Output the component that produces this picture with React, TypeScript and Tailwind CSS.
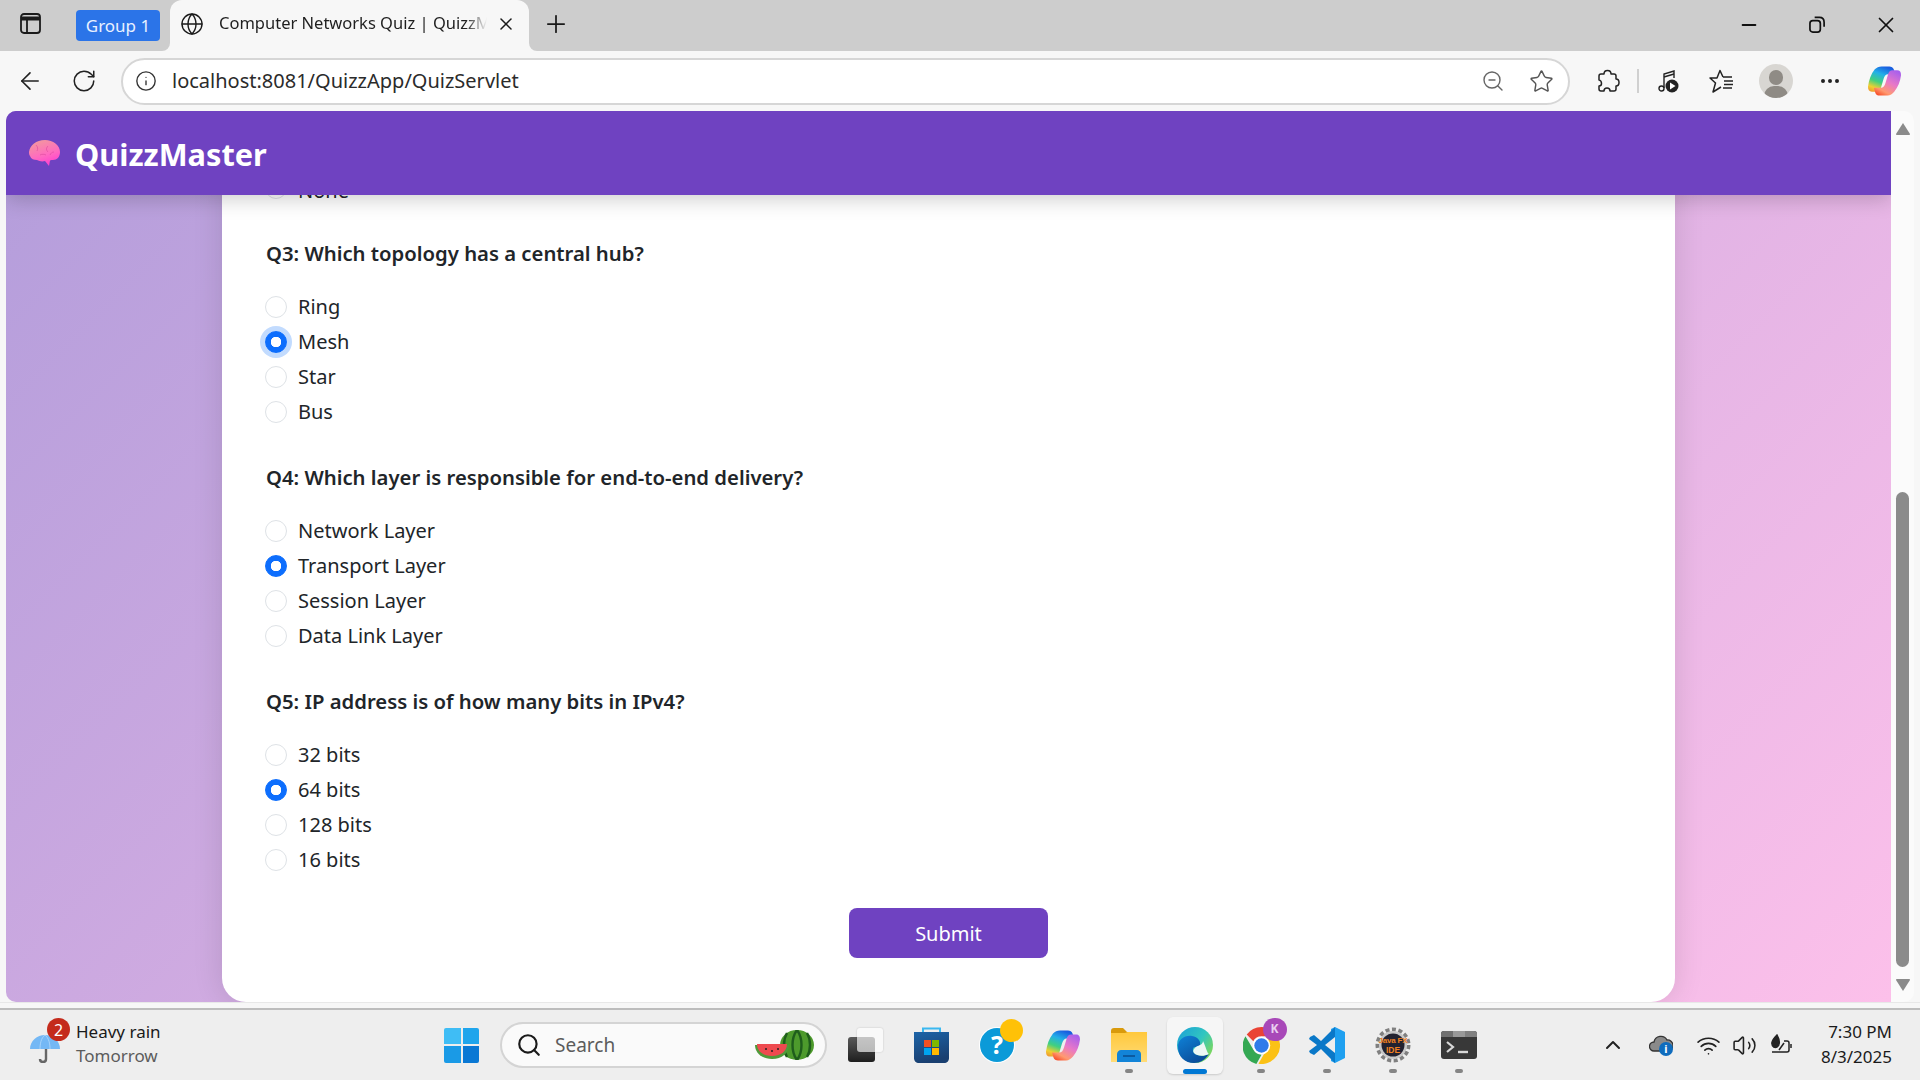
import { ArrowLeft, ChevronUp, Globe, Info, Minus, MoreHorizontal, Plus, RotateCw, Search, Star, Volume2, Wifi, X, ZoomOut } from 'lucide-react'

const UI_FONT = "font-['Noto_Sans',sans-serif]"

const questions = [
  { title: 'Q3: Which topology has a central hub?', options: ['Ring', 'Mesh', 'Star', 'Bus'], picked: 1, focused: true },
  { title: 'Q4: Which layer is responsible for end-to-end delivery?', options: ['Network Layer', 'Transport Layer', 'Session Layer', 'Data Link Layer'], picked: 1 },
  { title: 'Q5: IP address is of how many bits in IPv4?', options: ['32 bits', '64 bits', '128 bits', '16 bits'], picked: 1 },
]

function Copilot({ size, id }: { size: number; id: string }) {
  return (
    <svg width={size} height={size} viewBox="0 0 35 32">
      <defs>
        <linearGradient id={`${id}a`} x1="0.6" y1="0" x2="0.2" y2="1">
          <stop offset="0" stopColor="#1a5fe0" />
          <stop offset="0.3" stopColor="#22b0e8" />
          <stop offset="0.6" stopColor="#40d080" />
          <stop offset="0.85" stopColor="#f0d030" />
          <stop offset="1" stopColor="#f0a030" />
        </linearGradient>
        <linearGradient id={`${id}b`} x1="0.8" y1="0" x2="0.2" y2="1">
          <stop offset="0" stopColor="#a860ec" />
          <stop offset="0.45" stopColor="#e878c8" />
          <stop offset="0.8" stopColor="#ff9a70" />
          <stop offset="1" stopColor="#f8502c" />
        </linearGradient>
      </defs>
      <path d="M14 1h8c2 0 4 1 4.500 3l1.500 5h-7c-3 0-4 2-5 5l-3 10c-1 2-2 3-4 3H4c-3 0-4-2-4-5C1 15 3 9 7 4c2-2 4-3 7-3z" fill={`url(#${id}a)`} />
      <path d="M20 31h-8c-2 0-4-1-4.500-3L6 23h7c3 0 4-2 5-5l3-10c1-2 2-3 4-3h5c3 0 4 2 4 5-1 7-3 12-7 17-2 2-4 4-7 4z" fill={`url(#${id}b)`} />
    </svg>
  )
}

function Brain() {
  return (
    <svg width="33" height="28" viewBox="0 0 33 28">
      <defs>
        <linearGradient id="brain" x1="0.2" y1="0" x2="0.6" y2="1">
          <stop offset="0" stopColor="#f29a9c" />
          <stop offset="0.6" stopColor="#ff6ac0" />
          <stop offset="1" stopColor="#ff3fd0" />
        </linearGradient>
      </defs>
      <path d="M1 13C2 6 8 1 17 1c8 0 15 5 15 12 0 5-3 8-7 8-1 0-2 0-3 .5l-1 5.500-4-5c-3 1-6 0-8-1-3 0-6-1-7-4-1-1-1-3-1-4z" fill="url(#brain)" />
      <path d="M8 6c2 2 2 4 1 6M20 7c-2 2-2 4 0 6M26 13c-2 0-3 1-4 3M12 16c2-1 4-1 6 0" fill="none" stroke="#d8459a" strokeWidth="0.8" opacity="0.7" />
    </svg>
  )
}

function Watermelon() {
  return (
    <svg width="60" height="30" viewBox="0 0 60 30">
      <ellipse cx="42" cy="15" rx="17" ry="15" fill="#4d9a2c" />
      <path d="M42 0c-6 8-6 22 0 30M42 0c6 8 6 22 0 30M32 3c-4 7-4 17 0 24M52 3c4 7 4 17 0 24" fill="none" stroke="#1f5d1c" strokeWidth="2.4" />
      <path d="M0 15h34c0 8-7 14-17 14S0 23 0 15z" fill="#4f9a3a" />
      <path d="M2 14h30c0 7-6 12-15 12S2 21 2 14z" fill="#ee4a4f" />
      <circle cx="11" cy="19" r="1" fill="#222" />
      <circle cx="17" cy="21" r="1" fill="#222" />
      <circle cx="23" cy="19" r="1" fill="#222" />
    </svg>
  )
}

function Edge() {
  return (
    <svg width="36" height="36" viewBox="0 0 36 36">
      <defs>
        <linearGradient id="edgeA" x1="0" y1="0" x2="1" y2="0.7">
          <stop offset="0" stopColor="#1a9fd8" />
          <stop offset="0.6" stopColor="#31c6c0" />
          <stop offset="1" stopColor="#7fd858" />
        </linearGradient>
        <linearGradient id="edgeB" x1="0" y1="0" x2="0.7" y2="1">
          <stop offset="0" stopColor="#0f82d8" />
          <stop offset="1" stopColor="#0a4a96" />
        </linearGradient>
      </defs>
      <circle cx="18" cy="18" r="18" fill="url(#edgeA)" />
      <path d="M1 20C1 12 8 8 15 9c6 1 9 5 8 9-1 2-3 3-5 2-2 0-3 3-1 6 3 3 9 4 15 1-4 6-9 9-15 9C8 36 1 30 1 20z" fill="url(#edgeB)" />
      <path d="M17 22c2-3 4-3 6-4 3-1 3-4 3-4 3 6 4 12 6 13-6 3-12 2-15-1-1-1-1-3 0-4z" fill="#eef7f4" />
    </svg>
  )
}

function Chrome() {
  return (
    <svg width="37" height="37" viewBox="0 0 36 36">
      <path d="M18 0a18 18 0 0 1 15.600 9H18a9 9 0 0 0-8 4.800L3.600 7.400A18 18 0 0 1 18 0z" fill="#ea4335" />
      <path d="M2.400 9 10 22a9 9 0 0 0 8 5l-5 9A18 18 0 0 1 2.400 9z" fill="#34a853" />
      <path d="M33.600 9A18 18 0 0 1 15 35.800L23 22a9 9 0 0 0-1-13z" fill="#fbc116" />
      <circle cx="18" cy="18" r="8.500" fill="#fff" />
      <circle cx="18" cy="18" r="7" fill="#2f7bea" />
    </svg>
  )
}

function VsCode() {
  return (
    <svg width="36" height="36" viewBox="0 0 36 36">
      <path d="M26 0 36 5v26l-10 5-4-2V2z" fill="#1fa0f0" />
      <path d="M26 0v36L12 22l-7 6-4-2-1-2 8-6-8-6 1-2 4-2 7 6z" fill="#0a78c8" />
      <path d="M26 10v16l-10-8z" fill="#eeeeee" />
    </svg>
  )
}

function Gear() {
  return (
    <svg width="36" height="36" viewBox="0 0 36 36">
      <circle cx="18" cy="18" r="15.500" fill="none" stroke="#808080" strokeWidth="4" strokeDasharray="4 2.500" />
      <circle cx="18" cy="18" r="14" fill="#c8c8c8" />
      <circle cx="18" cy="18" r="11.500" fill="#222230" />
      <text x="18" y="15.500" textAnchor="middle" fontSize="8" fontWeight="700" fill="#f08020" fontFamily="Liberation Sans, sans-serif" textLength="29">Java FX</text>
      <text x="18" y="25.500" textAnchor="middle" fontSize="8.500" fontWeight="700" fill="#f08020" fontFamily="Liberation Sans, sans-serif">IDE</text>
    </svg>
  )
}

function Question({ title, options, picked, focused }: { title: string; options: string[]; picked: number; focused?: boolean }) {
  return (
    <div className="pb-[31px] last:pb-[28px]">
      <h5 className="mb-[23px] h-[30px] text-[20.3px] leading-[28px] font-semibold text-[#212529]">{title}</h5>
      {options.map((opt, i) => (
        <Option key={opt} label={opt} group={title} checked={i === picked} focused={focused && i === picked} />
      ))}
    </div>
  )
}

function Option({ label, group, checked, focused, labelClass }: { label: string; group: string; checked?: boolean; focused?: boolean; labelClass?: string }) {
  return (
    <label className="mb-[5px] flex h-[30px] items-center gap-[11px] -ml-px text-[20px] text-[#212529]">
      <input
        type="radio"
        name={group}
        defaultChecked={checked}
        className={`size-[22px] appearance-none rounded-full border border-[#dee2e6] bg-white checked:border-[#0d6efd] checked:bg-[radial-gradient(circle,#fff_5px,#0d6efd_5.5px)] ${focused ? 'shadow-[0_0_0_5px_rgba(13,110,253,0.25)]' : ''}`}
      />
      <span className={labelClass}>{label}</span>
    </label>
  )
}

function TabStrip() {
  return (
    <div className="flex h-[51px] shrink-0 items-center bg-[#cdcdcd]">
      <svg className="mb-[4px] ml-[20px]" width="21" height="21" viewBox="0 0 21 21" fill="none" stroke="#1a1a1a" strokeWidth="1.8">
        <rect x="1" y="1" width="19" height="19" rx="3" />
        <path d="M1 5.500h19" strokeWidth="4" />
        <path d="M7 6v14" />
      </svg>
      <div className="ml-[35px] flex h-[31px] w-[84px] items-center justify-center rounded-[4px] bg-[#2b74e8] text-[17px] text-[#e8f0ff]">Group 1</div>
      <div className="relative ml-[10px] flex h-full w-[359px] items-center rounded-t-[12px] bg-[#f7f7f7] pb-[4px] pl-[10px]">
        <div className="absolute bottom-0 -left-[8px] size-[8px] bg-[#f7f7f7]">
          <div className="size-full rounded-br-[8px] bg-[#cdcdcd]" />
        </div>
        <div className="absolute -right-[8px] bottom-0 size-[8px] bg-[#f7f7f7]">
          <div className="size-full rounded-bl-[8px] bg-[#cdcdcd]" />
        </div>
        <Globe size={24} strokeWidth={1.4} className="text-[#1a1a1a]" />
        <span className="ml-[15px] w-[268px] overflow-hidden text-[16.5px] whitespace-nowrap text-[#1f1f1f] [mask-image:linear-gradient(90deg,#000_92%,transparent)]">Computer Networks Quiz | QuizzMaster</span>
        <X size={20} strokeWidth={1.8} className="ml-[9px] text-[#1a1a1a]" />
      </div>
      <Plus size={28} strokeWidth={1.5} className="mb-[4px] ml-[13px] text-[#1a1a1a]" />
      <Minus size={22} strokeWidth={2} className="mb-[2px] ml-auto text-[#111]" />
      <svg className="mb-[2px] ml-[49px]" width="17" height="17" viewBox="0 0 18 18" fill="none" stroke="#111" strokeWidth="1.8">
        <rect x="1" y="5" width="11" height="12" rx="3" />
        <path d="M6 1.500h5c3 0 5 2 5 5v5" />
      </svg>
      <X size={26} strokeWidth={1.6} className="mr-[21px] mb-[2px] ml-[47px] text-[#111]" />
    </div>
  )
}

function Toolbar() {
  return (
    <div className="flex h-[60px] shrink-0 items-center bg-[#f7f7f7]">
      <ArrowLeft size={28} strokeWidth={1.4} className="ml-[16px] text-[#222]" />
      <RotateCw size={26} strokeWidth={1.4} className="ml-[27px] text-[#222]" />
      <div className="ml-[24px] flex h-[47px] w-[1449px] items-center rounded-full border-2 border-[#d6d6d6] bg-white pl-[12px]">
        <Info size={22} strokeWidth={1.5} className="text-[#333]" />
        <span className="ml-[15px] text-[20px] text-[#2b2b2b]">localhost:8081/QuizzApp/QuizServlet</span>
        <ZoomOut size={24} strokeWidth={1.4} className="ml-auto text-[#666]" />
        <Star size={25} strokeWidth={1.4} className="mr-[14px] ml-[24px] text-[#555]" />
      </div>
      <svg className="ml-[25px]" width="25" height="25" viewBox="0 0 25 25" fill="none" stroke="#222" strokeWidth="1.5" strokeLinejoin="round">
        <path d="M8 5h1c0-2 1.500-3.500 3.500-3.500S16 3 16 5h3c1 0 2 1 2 2v3c2 0 3 1.500 3 3.500S23 17 21 17v3c0 1-1 2-2 2h-4c0-2-1-3-3-3s-3 1-3 3H6c-1 0-2-1-2-2v-3c1.500 0 2.500-1 2.500-2.500S5.500 11 4 11V7c0-1 1-2 2-2z" />
      </svg>
      <div className="ml-[17px] h-[24px] w-[2px] bg-[#d0d0d0]" />
      <svg className="ml-[19px]" width="21" height="24" viewBox="0 0 21 24" fill="none" stroke="#222" strokeWidth="1.4">
        <circle cx="3.500" cy="19.500" r="2.500" />
        <path d="M6 19V5l10-3v7" />
        <path d="M6 8l10-3" />
        <circle cx="14" cy="17" r="6.500" fill="#222" stroke="none" />
        <path d="M12 13.500v7l5.500-3.500z" fill="#fff" stroke="none" />
      </svg>
      <svg className="ml-[30px]" width="25" height="25" viewBox="0 0 25 25" fill="none" stroke="#222" strokeWidth="1.5" strokeLinejoin="round">
        <path d="M14 8l-3-6.500L8 9H1l5.500 5L4 23l8-5" />
        <path d="M14 8h9M15 12h9M15 15.500h9M14 19h9" />
      </svg>
      <div className="relative ml-[25px] h-[34px] w-[34px] overflow-hidden rounded-full bg-[#d8d6d2]">
        <div className="absolute top-[6px] left-[10px] h-[15px] w-[14px] rounded-full bg-[#8f8b85]" />
        <div className="absolute top-[22px] left-[5px] h-[20px] w-[24px] rounded-full bg-[#8f8b85]" />
      </div>
      <MoreHorizontal size={24} strokeWidth={2} className="ml-[25px] text-[#222]" />
      <div className="ml-[26px]">
        <Copilot size={34} id="cpTool" />
      </div>
    </div>
  )
}

function Page() {
  return (
    <div className="mr-[6px] ml-[6px] flex min-h-0 flex-1 overflow-hidden rounded-[10px]">
      <main className="relative flex flex-1 flex-col justify-end overflow-hidden bg-[linear-gradient(135deg,#b39ddb,#fcc0ea)]">
        <nav className="absolute top-0 right-0 left-0 z-10 flex h-[84px] items-center bg-[#6f42c1] pl-[22px] shadow-[0_4px_20px_rgba(0,0,0,0.2)]">
          <Brain />
          <span className="ml-[14px] pt-[3px] text-[30.7px] font-bold text-white">QuizzMaster</span>
        </nav>
        <div className="ml-[216px] w-[1453px] shrink-0 rounded-b-[24px] bg-white px-[44px] pb-[44px] shadow-[0_0_30px_rgba(0,0,0,0.12)]">
          <div className="pb-[31px]">
            <Option label="None" group="q2" labelClass="pt-[5px]" />
          </div>
          <div>
            {questions.map((q) => (
              <Question key={q.title} {...q} />
            ))}
          </div>
          <div className="flex justify-center">
            <button className="h-[50px] w-[199px] rounded-[8px] bg-[#6f42c1] pt-[2px] text-[20px] text-white">Submit</button>
          </div>
        </div>
      </main>
      <aside className="flex w-[23px] shrink-0 flex-col items-center bg-[#fbfbfb] pt-[12px]">
        <svg width="14" height="12" viewBox="0 0 14 12">
          <path d="M7 0l7 11c0 .5-.3 1-1 1H1c-.7 0-1-.5-1-1z" fill="#8b8b8b" />
        </svg>
        <div className="mt-[357px] h-[475px] w-[13px] rounded-full bg-[#8b8b8b]" />
        <svg className="mt-[12px]" width="14" height="12" viewBox="0 0 14 12">
          <path d="M7 12L0 1c0-.5.3-1 1-1h12c.7 0 1 .5 1 1z" fill="#8b8b8b" />
        </svg>
      </aside>
    </div>
  )
}

function Slot({ children, dot, active }: { children?: React.ReactNode; dot?: boolean; active?: boolean }) {
  return (
    <div className={`relative mx-[5px] flex h-[57px] w-[56px] items-center justify-center rounded-[6px] ${active ? 'bg-[#f6f6f6] shadow-[0_1px_2px_rgba(0,0,0,0.15)]' : ''}`}>
      {children}
      {dot && <div className="absolute bottom-[1px] h-[4px] w-[8px] rounded-full bg-[#858585]" />}
      {active && <div className="absolute bottom-0 h-[5px] w-[24px] rounded-full bg-[#0078d4]" />}
    </div>
  )
}

function Taskbar() {
  return (
    <div className="flex h-[72px] shrink-0 items-center border-t-2 border-[#bdbdbd] bg-[#eeeeee]">
      <div className="relative ml-[30px] h-[40px] w-[30px]">
        <svg className="mt-[8px]" width="30" height="30" viewBox="0 0 30 30">
          <path d="M0 16C0 8 7 2 15 2s15 6 15 14z" fill="#74b8f5" />
          <path d="M15 2c-4 3-5 9-5 14M15 2c4 3 5 9 5 14" fill="none" stroke="#a8d4fa" strokeWidth="1" />
          <path d="M16 16v10c0 4-6 4-6 0" fill="none" stroke="#666" strokeWidth="2.400" />
        </svg>
        <div className="absolute -top-[7px] left-[17px] flex size-[23px] items-center justify-center rounded-full bg-[#c42b1c] text-[16px] text-white">2</div>
      </div>
      <div className="mb-[3px] ml-[16px] w-[100px] text-[17px] leading-[24px]">
        <div className="text-[#1a1a1a]">Heavy rain</div>
        <div className="text-[#5c5c5c]">Tomorrow</div>
      </div>
      <div className="ml-[268px] grid h-[35px] w-[35px] grid-cols-2 gap-[2px]">
        <div className="rounded-tl-[2px] bg-[#3fbdf5]" />
        <div className="rounded-tr-[2px] bg-[#1fa5ec]" />
        <div className="rounded-bl-[2px] bg-[#1a9ae6]" />
        <div className="rounded-br-[2px] bg-[#0a78d4]" />
      </div>
      <div className="ml-[21px] flex h-[46px] w-[327px] items-center rounded-full border-2 border-[#d4d4d4] bg-[#fafafa] pl-[14px]">
        <Search size={26} strokeWidth={2} className="text-[#1a1a1a]" />
        <span className="ml-[13px] text-[19px] text-[#5c5c5c]">Search</span>
        <div className="mr-[10px] ml-auto">
          <Watermelon />
        </div>
      </div>
      <div className="ml-[5px] flex">
        <Slot>
          <div className="relative h-[34px] w-[35px]">
            <div className="absolute bottom-0 left-0 h-[25px] w-[27px] rounded-[3px] bg-[linear-gradient(#5a5a5a,#1e1e1e)]" />
            <div className="absolute top-0 right-0 h-[24px] w-[26px] rounded-[3px] bg-white/65 shadow-[0_0_2px_rgba(0,0,0,0.2)]" />
          </div>
        </Slot>
        <Slot>
          <svg width="35" height="36" viewBox="0 0 35 36">
            <defs>
              <linearGradient id="store" x1="0" y1="0" x2="0.3" y2="1">
                <stop offset="0" stopColor="#1c64a8" />
                <stop offset="1" stopColor="#193f70" />
              </linearGradient>
            </defs>
            <path d="M9 6V1.500h17V6" fill="none" stroke="#3ab8f0" strokeWidth="2" />
            <path d="M0 5h35v26c0 3-2 5-5 5H5c-3 0-5-2-5-5z" fill="url(#store)" />
            <rect x="10" y="13" width="7" height="7" fill="#f25022" />
            <rect x="18" y="13" width="7" height="7" fill="#7fba00" />
            <rect x="10" y="21" width="7" height="7" fill="#00a4ef" />
            <rect x="18" y="21" width="7" height="7" fill="#ffb900" />
          </svg>
        </Slot>
        <Slot>
          <div className="relative flex size-[34px] items-center justify-center rounded-full bg-[#0b9ad8] text-[25px] font-bold text-white ring-1 ring-white">
            ?
            <div className="absolute -top-[9px] -right-[9px] h-[23px] w-[23px] rounded-full bg-[#ffc107]" />
          </div>
        </Slot>
        <Slot>
          <Copilot size={35} id="cpBar" />
        </Slot>
        <Slot dot>
          <svg width="36" height="34" viewBox="0 0 36 34">
            <defs>
              <linearGradient id="folder" x1="0" y1="0" x2="0" y2="1">
                <stop offset="0" stopColor="#ffc83c" />
                <stop offset="1" stopColor="#ffdc78" />
              </linearGradient>
            </defs>
            <path d="M0 3c0-2 1-3 3-3h9l4 4h17c2 0 3 1 3 3v4H0z" fill="#d99a0c" />
            <path d="M0 5h14l3-1h19v30H0z" fill="url(#folder)" />
            <path d="M6 34V26c0-2 2-4 4-4h16c2 0 4 2 4 4v8z" fill="#1284d8" />
            <path d="M12 28h12" stroke="#0b5aa0" strokeWidth="2" />
          </svg>
        </Slot>
        <Slot active>
          <Edge />
        </Slot>
        <Slot dot>
          <div className="relative">
            <Chrome />
            <div className="absolute -top-[9px] -right-[7px] flex h-[23px] w-[24px] items-center justify-center rounded-full bg-[#a848b8] text-[12px] font-bold text-[#e8d0f0]">K</div>
          </div>
        </Slot>
        <Slot dot>
          <VsCode />
        </Slot>
        <Slot dot>
          <Gear />
        </Slot>
        <Slot dot>
          <svg width="36" height="28" viewBox="0 0 36 28">
            <rect width="36" height="28" rx="3" fill="#383838" />
            <path d="M0 3c0-2 1-3 3-3h9v6H0z" fill="#707070" />
            <rect x="12" y="0" width="12" height="6" fill="#999" />
            <path d="M24 0h9c2 0 3 1 3 3v3H24z" fill="#808080" />
            <path d="M6 11l6 5-6 5" fill="none" stroke="#d8d8d8" strokeWidth="2.200" />
            <path d="M17 21h10" stroke="#d8d8d8" strokeWidth="2.400" />
          </svg>
        </Slot>
      </div>
      <ChevronUp size={24} strokeWidth={2} className="ml-auto text-[#222]" />
      <div className="relative ml-[24px] h-[22px] w-[24px]">
        <svg width="24" height="18" viewBox="0 0 24 18">
          <path d="M5 17a4.500 4.500 0 0 1 0-9 7 7 0 0 1 13-2 5 5 0 0 1 1 11z" fill="#8a8a8a" stroke="#333" strokeWidth="1.3" />
        </svg>
        <div className="absolute right-0 bottom-0 flex size-[14px] items-center justify-center rounded-full bg-[#0f6cbd] text-[11px] font-bold text-white">i</div>
      </div>
      <Wifi size={25} strokeWidth={1.6} className="ml-[23px] text-[#222]" />
      <Volume2 size={25} strokeWidth={1.5} className="ml-[11px] text-[#222]" />
      <svg className="ml-[12px]" width="24" height="22" viewBox="0 0 24 22" fill="none" stroke="#222" strokeWidth="1.500">
        <path d="M3 18h15c1 0 2-1 2-2V9c0-1-1-2-2-2h-3M22 10v4" />
        <path d="M8 1c-3 3-6 6-5 9 0 3 3 4 5 3 2-1 4-5 0-12z" fill="#222" />
        <path d="M10 16l5-7" />
      </svg>
      <div className="mr-[28px] mb-[2px] ml-[19px] w-[80px] text-right text-[17px] leading-[25px] text-[#1a1a1a]">
        <div>7:30 PM</div>
        <div>8/3/2025</div>
      </div>
    </div>
  )
}

export default function App() {
  return (
    <div className={`flex h-screen w-screen flex-col overflow-hidden bg-[#f7f7f7] ${UI_FONT}`}>
      <TabStrip />
      <Toolbar />
      <Page />
      <div className="h-[6px] shrink-0 border-t border-[#e8e8e8]" />
      <Taskbar />
    </div>
  )
}
